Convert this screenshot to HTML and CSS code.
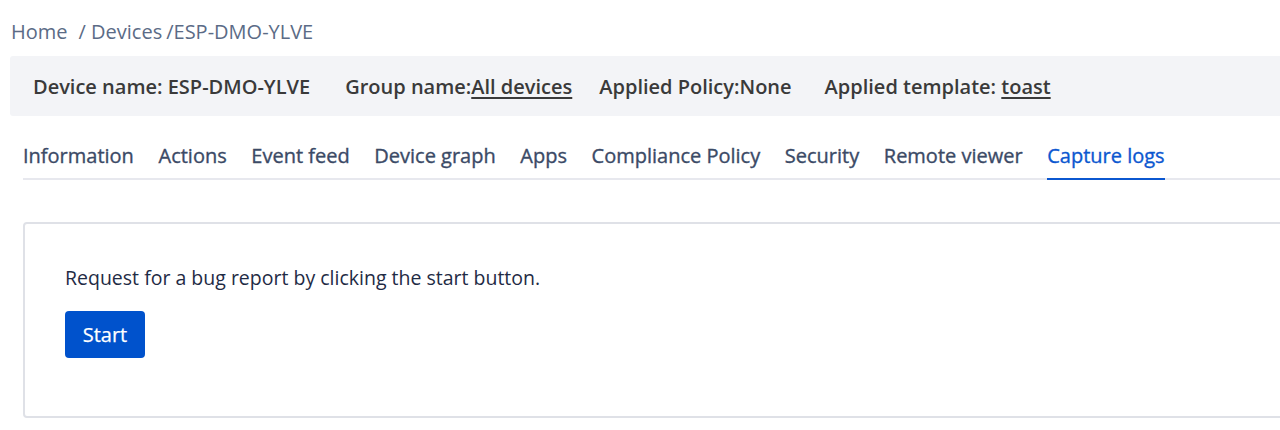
FILE: index.html
```html
<!DOCTYPE html>
<html>
<head>
<meta charset="utf-8">
<link rel="stylesheet" href="styles.css">
</head>
<body>
<div class="page">
  <nav class="crumbs">
    <span class="crumb">Home</span>
    <span class="crumb crumb-sep">/ Devices</span>
    <span class="crumb">/ESP-DMO-YLVE</span>
  </nav>
  <div class="meta-bar">
    <span class="meta">Device name: ESP-DMO-YLVE</span>
    <span class="meta">Group name:<a class="meta-link">All devices</a></span>
    <span class="meta meta-policy">Applied Policy:None</span>
    <span class="meta meta-template">Applied template: <a class="meta-link">toast</a></span>
  </div>
  <div class="tabs">
    <span class="tab">Information</span>
    <span class="tab">Actions</span>
    <span class="tab">Event feed</span>
    <span class="tab">Device graph</span>
    <span class="tab">Apps</span>
    <span class="tab">Compliance Policy</span>
    <span class="tab">Security</span>
    <span class="tab">Remote viewer</span>
    <span class="tab tab-active">Capture logs</span>
  </div>
  <div class="card">
    <p class="card-text">Request for a bug report by clicking the start button.</p>
    <button class="btn-primary">Start</button>
  </div>
</div>
</body>
</html>
```

FILE: styles.css
```css
html, body {
  margin: 0;
  padding: 0;
  background: #ffffff;
}
body {
  font-family: "Open Sans", "Noto Sans", sans-serif;
  font-size: 20px;
  overflow: hidden;
}
.page {
  padding: 0 0 0 10px;
  width: 1300px;
}
.crumbs {
  display: flex;
  height: 56px;
  align-items: center;
  padding: 6px 0 0 1px;
  box-sizing: border-box;
  color: #5b6b86;
  font-size: 20px;
}
.crumb-sep {
  margin-left: 11px;
  margin-right: 4px;
}
.meta-bar {
  display: flex;
  align-items: center;
  height: 60px;
  background: #f3f4f7;
  padding-left: 23px;
  gap: 35px;
  border-radius: 3px 0 0 3px;
}
.meta {
  font-weight: 600;
  color: #3a3a3a;
  font-size: 20px;
}
.meta-policy {
  margin-left: -8px;
}
.meta-template {
  margin-left: -2px;
}
.meta-link {
  text-decoration: underline;
  text-underline-offset: 3px;
  color: #3a3a3a;
}
.tabs {
  display: flex;
  gap: 24.6px;
  margin: 20px 0 0 13px;
  border-bottom: 2px solid #e7e8ee;
  height: 44px;
  box-sizing: border-box;
}
.tab {
  font-weight: 500;
  -webkit-text-stroke: 0.35px currentColor;
  color: #3b4a66;
  font-size: 20px;
  line-height: 40px;
  height: 42px;
  box-sizing: border-box;
}
.tab-active {
  color: #0b57d0;
  border-bottom: 2px solid #0b57d0;
  margin-bottom: -2px;
  height: 44px;
}
.card {
  margin: 42px 0 0 13px;
  border: 2px solid #dfe1e7;
  border-radius: 4px;
  height: 196px;
  box-sizing: border-box;
  padding: 40px 40px;
}
.card-text {
  margin: 0;
  color: #1f2b45;
  font-size: 19.5px;
  line-height: 28px;
}
.btn-primary {
  margin-top: 19px;
  width: 80px;
  height: 47px;
  border: none;
  border-radius: 4px;
  background: #0052cc;
  color: #ffffff;
  font-family: inherit;
  font-size: 20px;
  font-weight: 500;
  -webkit-text-stroke: 0.25px currentColor;
  padding: 0;
}
```
